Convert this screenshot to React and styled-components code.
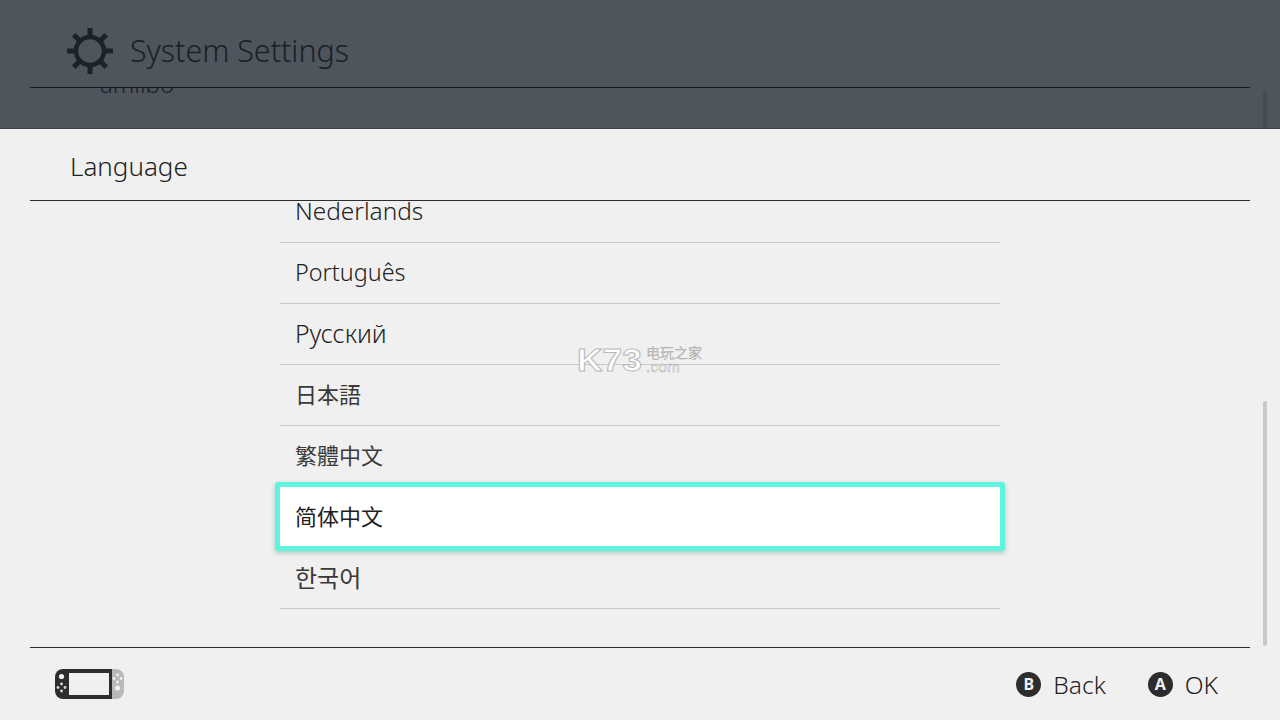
import React from 'react'
import styled, { createGlobalStyle } from 'styled-components'

const GlobalStyle = createGlobalStyle`
  html, body { margin: 0; padding: 0; background: #f0f0f0; }
  #root { width: 1280px; height: 720px; overflow: hidden; }
  * { box-sizing: border-box; }
`

const LATIN = '"Noto Sans", "Open Sans", sans-serif'

const languages = [
  { name: 'Nederlands', size: 24.4, lift: 3 },
  { name: 'Português', size: 23.4, lift: 3 },
  { name: 'Русский', size: 24.8, lift: 3 },
  { name: '日本語', cjk: 'JP', size: 22, lift: 5 },
  { name: '繁體中文', cjk: 'TC', size: 22, lift: 5 },
  { name: '简体中文', cjk: 'SC', size: 22, lift: 5, selected: true },
  { name: '한국어', cjk: 'KR', size: 24, lift: 3 }
]

const rowColor = p => {
  if (p.$selected) return '#1e1e1e'
  return p.$cjk ? '#3a3a3a' : '#222'
}

const Screen = styled.div`
  position: relative;
  width: 1280px;
  height: 720px;
  display: flex;
  flex-direction: column;
  overflow: hidden;
  font-family: ${LATIN};
  font-weight: 300;
  color: #222;
`

const DimmedPage = styled.div`
  height: 129px;
  flex: none;
  background: #4f555d;
  color: #1a2027;
  border-bottom: 1px solid #3d404e;
  position: relative;
`

const PageHeader = styled.div`
  height: 88px;
  margin: 0 30px;
  padding: 14px 0 0 36px;
  display: flex;
  align-items: center;
  gap: 16px;
  border-bottom: 1px solid #14191e;
`

const PageTitle = styled.div`
  font-size: 30.4px;
  line-height: 36px;
  margin-top: 1px;
`

const ClippedMenu = styled.div`
  height: 40px;
  overflow: hidden;
  padding-left: 100px;
`

const ClippedItem = styled.div`
  font-size: 24px;
  line-height: 30px;
  margin-top: -19px;
`

const Sheet = styled.div`
  flex: 1;
  display: flex;
  flex-direction: column;
  background: #f0f0f0;
  min-height: 0;
`

const SheetHeader = styled.div`
  height: 72px;
  margin: 0 30px;
  padding: 3px 0 0 40px;
  display: flex;
  align-items: center;
  border-bottom: 1px solid #2d2d2d;
  font-size: 26px;
  flex: none;
`

const ListArea = styled.div`
  flex: 1;
  min-height: 0;
  overflow: hidden;
  display: flex;
  flex-direction: column;
  align-items: center;
`

const List = styled.div`
  width: 720px;
  margin-top: -19px;
  flex: none;
`

const Row = styled.div`
  position: relative;
  height: 61px;
  padding: 0 0 ${p => p.$lift}px 15px;
  display: flex;
  align-items: center;
  border-bottom: 1px solid #c9c9c9;
  font-size: ${p => p.$size}px;
  font-weight: ${p => (p.$cjk ? 400 : 300)};
  font-family: ${p => (p.$cjk ? `"Noto Sans CJK ${p.$cjk}", sans-serif` : LATIN)};
  color: ${rowColor};
  ${p => p.$selected && `
    &::before {
      content: '';
      position: absolute;
      inset: -5px -5px -4px -5px;
      background: #fff;
      border: 5px solid #5ff5dc;
      border-radius: 3px;
      box-shadow: 0 2px 5px rgba(60, 120, 110, 0.35);
    }
  `}
`

const RowLabel = styled.span`
  position: relative;
`

const Footer = styled.div`
  height: 73px;
  flex: none;
  margin: 0 30px;
  padding: 0 32px 0 25px;
  display: flex;
  align-items: center;
  justify-content: space-between;
  border-top: 1px solid #2d2d2d;
`

const Hints = styled.div`
  display: flex;
  align-items: center;
  gap: 42px;
`

const Hint = styled.div`
  display: flex;
  align-items: center;
  gap: 12px;
  font-size: 24.5px;
`

const ButtonGlyph = styled.span`
  width: 25px;
  height: 25px;
  border-radius: 50%;
  background: #2d2d2d;
  color: #f0f0f0;
  font-size: 16px;
  font-weight: 700;
  display: flex;
  align-items: center;
  justify-content: center;
`

const Scrollbar = styled.div`
  position: absolute;
  left: 1263px;
  top: ${p => p.$top}px;
  width: 4px;
  height: ${p => p.$height}px;
  border-radius: 2px;
  background: ${p => p.$color};
`

const Watermark = styled.div`
  position: absolute;
  left: 577px;
  top: 344px;
  display: flex;
  align-items: flex-start;
  gap: 5px;
  pointer-events: none;
`

const WatermarkMark = styled.div`
  font-family: "Liberation Sans", sans-serif;
  font-size: 31px;
  font-weight: 700;
  line-height: 34px;
  transform: scaleX(1.14);
  transform-origin: left center;
  width: 64px;
  color: #fff;
  -webkit-text-stroke: 1px #b8b8b8;
`

const WatermarkSide = styled.div`
  display: flex;
  flex-direction: column;
  align-items: flex-start;
  color: #fff;
  -webkit-text-stroke: 0.5px #a8a8a8;
`

const WatermarkCn = styled.div`
  font-family: "Noto Sans CJK SC", sans-serif;
  font-size: 14px;
  line-height: 17px;
`

const WatermarkCom = styled.div`
  font-family: "Liberation Sans", sans-serif;
  font-size: 15px;
  line-height: 12px;
  letter-spacing: 0.4px;
`

const GearIcon = () => (
  <svg width="48" height="48" viewBox="-24 -24 48 48" fill="none" stroke="#1b2229">
    <circle r="14" strokeWidth="4.5" />
    {[0, 45, 90, 135, 180, 225, 270, 315].map(a => (
      <line key={a} x1="0" y1="-15" x2="0" y2="-23" strokeWidth="5" transform={`rotate(${a})`} />
    ))}
  </svg>
)

const ConsoleIcon = () => (
  <svg width="69" height="30" viewBox="0 0 69 30">
    <path d="M8 0H57V30H8A8 8 0 0 1 0 22V8A8 8 0 0 1 8 0Z" fill="#2d2d2d" />
    <path d="M57 0H61A8 8 0 0 1 69 8V22A8 8 0 0 1 61 30H57Z" fill="#b9b9b9" />
    <rect x="14" y="4" width="40" height="22" fill="#f0f0f0" />
    <circle cx="6.5" cy="7.5" r="2.6" fill="#f0f0f0" />
    <g fill="#d8d8d8">
      <circle cx="6.5" cy="15" r="1.4" />
      <circle cx="3" cy="18.5" r="1.4" />
      <circle cx="10" cy="18.5" r="1.4" />
      <circle cx="6.5" cy="22" r="1.4" />
    </g>
    <g fill="#f0f0f0">
      <circle cx="62.5" cy="6" r="1.4" />
      <circle cx="59" cy="9.5" r="1.4" />
      <circle cx="66" cy="9.5" r="1.4" />
      <circle cx="62.5" cy="13" r="1.4" />
      <circle cx="62.5" cy="19" r="2.6" />
    </g>
  </svg>
)

export default function App() {
  return (
    <Screen>
      <GlobalStyle />
      <DimmedPage>
        <PageHeader>
          <GearIcon />
          <PageTitle>System Settings</PageTitle>
        </PageHeader>
        <ClippedMenu>
          <ClippedItem>amiibo</ClippedItem>
        </ClippedMenu>
        <Scrollbar $top={92} $height={36} $color="#454a52" />
      </DimmedPage>
      <Sheet>
        <SheetHeader>Language</SheetHeader>
        <ListArea>
          <List>
            {languages.map(lang => (
              <Row key={lang.name} $cjk={lang.cjk} $size={lang.size} $lift={lang.lift} $selected={lang.selected}>
                <RowLabel>{lang.name}</RowLabel>
              </Row>
            ))}
          </List>
        </ListArea>
        <Footer>
          <ConsoleIcon />
          <Hints>
            <Hint><ButtonGlyph>B</ButtonGlyph>Back</Hint>
            <Hint><ButtonGlyph>A</ButtonGlyph>OK</Hint>
          </Hints>
        </Footer>
      </Sheet>
      <Scrollbar $top={401} $height={245} $color="#c8c8c8" />
      <Watermark>
        <WatermarkMark>K73</WatermarkMark>
        <WatermarkSide>
          <WatermarkCn>电玩之家</WatermarkCn>
          <WatermarkCom>.com</WatermarkCom>
        </WatermarkSide>
      </Watermark>
    </Screen>
  )
}
